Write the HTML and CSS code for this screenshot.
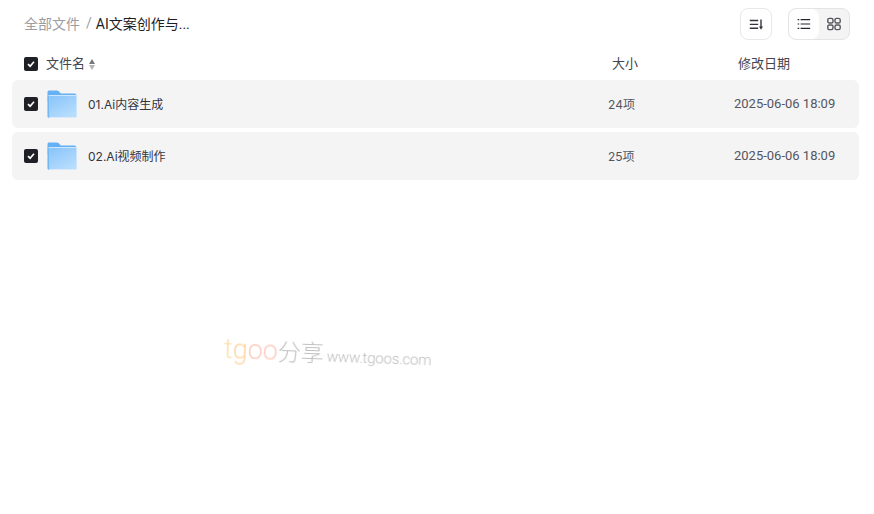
FILE: index.html
```html
<!DOCTYPE html>
<html lang="zh-CN">
<head>
  <meta charset="UTF-8" />
  <title>全部文件</title>
  <link rel="stylesheet" href="styles.css">
</head>
<body>
  <div class="toolbar">
    <div class="crumbs">
      <span class="crumb-root">全部文件</span>
      <span class="crumb-sep">/</span>
      <span class="crumb-current">AI文案创作与...</span>
    </div>
    <div class="tools">
      <button class="tool-btn" type="button">
        <svg width="16" height="16" viewBox="0 0 16 16" fill="none" stroke="#33343c" stroke-width="1.4">
          <path d="M1.8 4.5h8.4M1.8 8.4h8.4M1.8 12.3h8.4"/>
          <path d="M13 3.4v8.2" stroke-width="1.4"/>
          <path d="M11 10.6h4L13 13.8z" fill="#33343c" stroke="none"/>
        </svg>
      </button>
      <div class="view-switch">
        <button class="view-btn active" type="button">
          <svg width="14" height="14" viewBox="0 0 14 14" fill="none" stroke="#26272e" stroke-width="1.2">
            <path d="M3.6 2.6h9.6M3.6 7h9.6M3.6 11.4h9.6"/>
            <path d="M.6 2.6h1.6M.6 7h1.6M.6 11.4h1.6"/>
          </svg>
        </button>
        <button class="view-btn" type="button">
          <svg width="14" height="14" viewBox="0 0 14 14" fill="none" stroke="#55565c" stroke-width="1.4">
            <rect x=".8" y="1.4" width="5.2" height="4.6" rx="1.6"/>
            <rect x="8" y="1.4" width="5.2" height="4.6" rx="1.6"/>
            <rect x=".8" y="8" width="5.2" height="4.6" rx="1.6"/>
            <rect x="8" y="8" width="5.2" height="4.6" rx="1.6"/>
          </svg>
        </button>
      </div>
    </div>
  </div>

  <div class="list-head">
    <div class="col-name">
      <span class="check"><svg width="8" height="8" viewBox="0 0 8 8" fill="none" stroke="#fff" stroke-width="1.7"><path d="M1 4.2 3.1 6.2 7 1.8"/></svg></span>
      <span class="head-label">文件名</span>
      <span class="sort-arrows"></span>
    </div>
    <div class="col-size">大小</div>
    <div class="col-date">修改日期</div>
  </div>

  <div class="list">
    <div class="row">
      <span class="check"><svg width="8" height="8" viewBox="0 0 8 8" fill="none" stroke="#fff" stroke-width="1.7"><path d="M1 4.2 3.1 6.2 7 1.8"/></svg></span>
      <svg class="folder" width="30" height="28" viewBox="0 0 30 28">
        <use href="#folder-icon"/>
      </svg>
      <span class="row-name">01.Ai内容生成</span>
      <span class="row-size">24项</span>
      <span class="row-date">2025-06-06 18:09</span>
    </div>
    <div class="row">
      <span class="check"><svg width="8" height="8" viewBox="0 0 8 8" fill="none" stroke="#fff" stroke-width="1.7"><path d="M1 4.2 3.1 6.2 7 1.8"/></svg></span>
      <svg class="folder" width="30" height="28" viewBox="0 0 30 28">
        <use href="#folder-icon"/>
      </svg>
      <span class="row-name">02.Ai视频制作</span>
      <span class="row-size">25项</span>
      <span class="row-date">2025-06-06 18:09</span>
    </div>
  </div>

  <!-- folder shape shared by the rows -->
  <svg class="defs" width="0" height="0">
    <defs>
      <linearGradient id="folderFront" x1="0.2" y1="0" x2="0.8" y2="1">
        <stop offset="0" stop-color="#8cc6fa"/>
        <stop offset="1" stop-color="#b9defd"/>
      </linearGradient>
      <symbol id="folder-icon" viewBox="0 0 30 28">
        <path d="M.5 2C.5 1 1.2.4 2.2.4h7.6c.8 0 1.4.3 2 .9l2 2.1h13.6c1.2 0 2 .8 2 2V12H.5z" fill="#66b1f4"/>
        <path d="M.5 6.4c0-.8.6-1.3 1.4-1.3h26.6c.8 0 1.4.5 1.4 1.3v19.9c0 .9-.6 1.4-1.4 1.4H1.9c-.8 0-1.4-.5-1.4-1.4z" fill="#cfe7fc"/>
        <path d="M.5 5.6v20.7c0 .9.6 1.4 1.4 1.4h.6V5.6z" fill="#73b8f5"/>
        <rect x="2.5" y="5.9" width="26.7" height="21" rx="1" fill="url(#folderFront)"/>
        <rect x="23" y="9.5" width="3.4" height="1.4" fill="#a8d2f8"/>
      </symbol>
    </defs>
  </svg>

  <div class="watermark">
    <span class="wm-t">t</span><span class="wm-g">g</span><span class="wm-o">oo</span><span class="wm-cn">分享</span>
    <span class="wm-url">www.tgoos.com</span>
  </div>
</body>
</html>
```

FILE: styles.css
```css
* { box-sizing: border-box; margin: 0; padding: 0; }
body {
  background: #fff;
  color: #33343f;
  font-family: Inter, 'Noto Sans CJK SC', sans-serif;
  font-size: 12px;
  height: 514px;
  overflow: hidden;
  position: relative;
}
button { background: none; border: none; cursor: pointer; }

.toolbar {
  height: 48px;
  padding: 8px 24px 8px 24px;
  display: flex;
  justify-content: space-between;
  align-items: center;
}
.crumbs {
  display: flex;
  align-items: center;
  font-family: Roboto, 'Noto Sans CJK SC', sans-serif;
  font-size: 14px;
  margin-top: -2px;
}
.crumb-root { color: #9c9ca3; }
.crumb-sep { color: #9c9ca3; margin: 0 4px 0 6px; font-size: 14px; }
.crumb-current { color: #1d1e26; }

.tools { display: flex; gap: 16px; }
.tool-btn {
  width: 32px;
  height: 32px;
  border: 1px solid #e8e8ea;
  border-radius: 8px;
  display: flex;
  align-items: center;
  justify-content: center;
}
.view-switch {
  width: 62px;
  height: 32px;
  border: 1px solid #e4e4e6;
  border-radius: 8px;
  background: #f4f4f4;
  display: flex;
  overflow: hidden;
}
.view-btn {
  flex: 1;
  display: flex;
  align-items: center;
  justify-content: center;
}
.view-btn.active { background: #fff; border-radius: 8px; }

.check {
  width: 14px;
  height: 14px;
  border-radius: 2px;
  background: #1f2026;
  display: flex;
  align-items: center;
  justify-content: center;
  flex-shrink: 0;
}

.list-head {
  height: 32px;
  padding-left: 24px;
  display: flex;
  align-items: center;
  color: #44454f;
  font-family: Roboto, 'Noto Sans CJK SC', sans-serif;
  font-size: 13px;
  line-height: 30px;
}
.col-name { width: 588px; display: flex; align-items: center; }
.head-label { margin-left: 8px; }
.sort-arrows {
  margin-left: 4px;
  width: 7px;
  height: 11px;
  position: relative;
}
.sort-arrows::before, .sort-arrows::after {
  content: '';
  position: absolute;
  left: 0;
  border-left: 3.5px solid transparent;
  border-right: 3.5px solid transparent;
}
.sort-arrows::before { top: 0; border-bottom: 5px solid #77787e; }
.sort-arrows::after { bottom: 0; border-top: 5px solid #b4b4b8; }
.col-size { width: 126px; }

.list {
  padding: 0 15px 0 12px;
  display: flex;
  flex-direction: column;
  gap: 4px;
}
.row {
  height: 48px;
  background: #f4f4f4;
  border-radius: 6px;
  padding-left: 12px;
  display: flex;
  align-items: center;
}
.folder { margin-left: 8.5px; flex-shrink: 0; }
.row-name, .row-size, .row-date { margin-bottom: 2px; }
.row-name { margin-left: 11.5px; width: 520px; color: #33343f; }
.row-size { width: 126px; color: #55565f; }
.row-date {
  color: #55565f;
  font-family: Roboto, sans-serif;
  font-size: 13px;
}

.defs { position: absolute; }

.watermark {
  position: absolute;
  left: 224px;
  top: 331px;
  display: flex;
  align-items: baseline;
  white-space: nowrap;
  font-family: Roboto, 'Noto Sans CJK SC', sans-serif;
  font-weight: 300;
  transform: rotate(2deg);
  transform-origin: left center;
  filter: blur(0.4px);
}
.wm-t, .wm-g, .wm-o { font-size: 27px; }
.wm-cn { font-size: 23px; }
.wm-t { color: #fde2b0; }
.wm-g { color: #fdd8a8; }
.wm-o { color: #fdcfc4; }
.wm-cn { color: #c0c0c0; }
.wm-url { font-size: 15px; letter-spacing: -0.2px; color: #bcbcbc; margin-left: 3px; }
```
